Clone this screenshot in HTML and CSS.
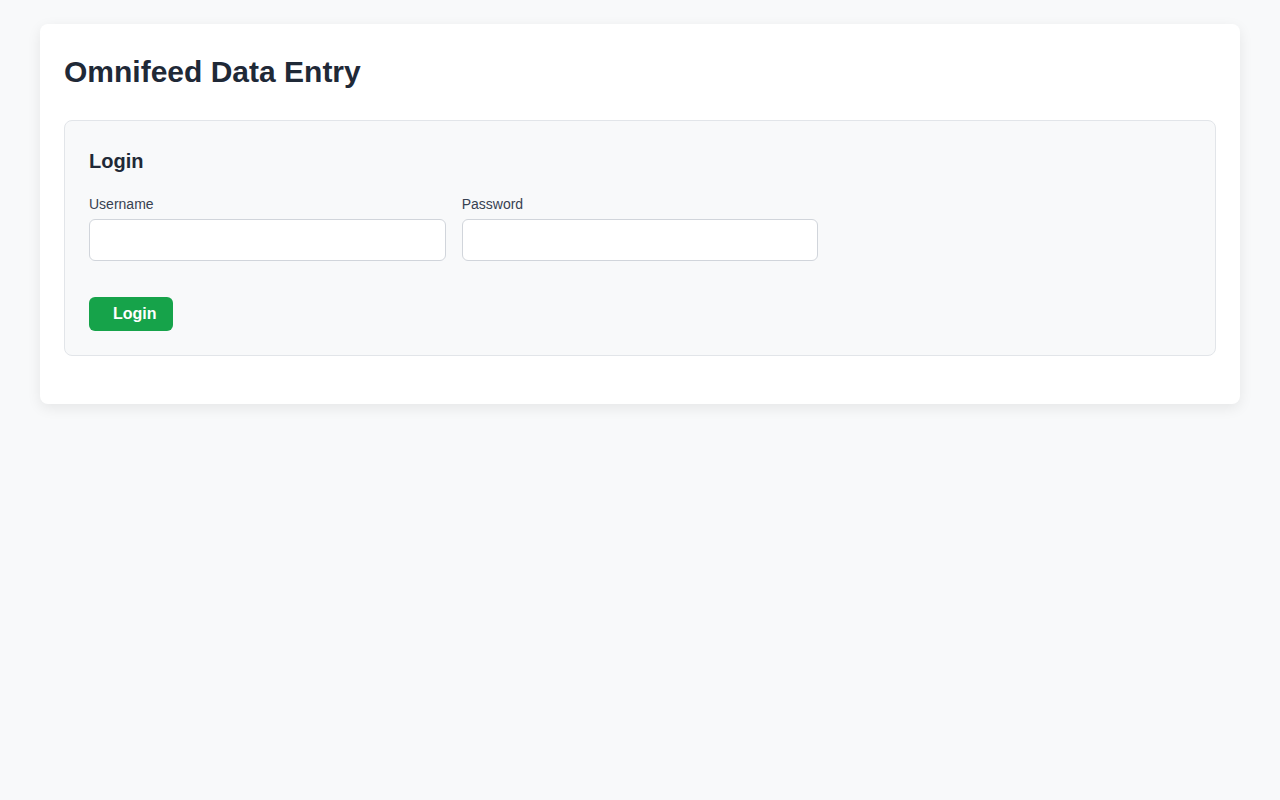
FILE: index.html
```html
<!DOCTYPE html>
<html lang="en">
<head>
<meta charset="utf-8">
<title>Omnifeed Data Entry</title>
<link rel="stylesheet" href="styles.css">
</head>
<body>
<main class="container">
  <h1 class="title">Omnifeed Data Entry</h1>
  <section class="panel">
    <h2 class="panel-title">Login</h2>
    <form class="form">
      <div class="grid">
        <div class="field">
          <label class="label" for="username">Username</label>
          <input class="input" id="username" type="text">
        </div>
        <div class="field">
          <label class="label" for="password">Password</label>
          <input class="input" id="password" type="password">
        </div>
      </div>
      <button class="btn" type="button">Login</button>
    </form>
  </section>
</main>
</body>
</html>
```

FILE: styles.css
```css
* { box-sizing: border-box; }
html, body { margin: 0; padding: 0; }
body {
  background: #f8f9fa;
  font-family: "Liberation Sans", Arial, sans-serif;
  color: #1f2937;
  padding: 24px 40px;
}
.container {
  background: #ffffff;
  border-radius: 8px;
  box-shadow: 0 4px 14px rgba(0, 0, 0, 0.08);
  padding: 31px 24px 32px;
}
.title {
  margin: 0 0 31px;
  font-size: 30px;
  line-height: 34px;
  font-weight: 700;
  color: #1f2937;
}
.panel {
  background: #f8f9fa;
  border: 1px solid #e2e5e9;
  border-radius: 8px;
  padding: 24px;
  margin-bottom: 16px;
}
.panel-title {
  margin: 1px 0 18px;
  font-size: 20px;
  line-height: 30px;
  font-weight: 700;
  color: #1f2937;
}
.form { display: flex; flex-direction: column; align-items: flex-start; }
.grid {
  display: grid;
  grid-template-columns: repeat(3, 1fr);
  gap: 16px;
  width: 100%;
  margin-bottom: 36px;
}
.field { display: flex; flex-direction: column; gap: 5px; }
.label {
  font-size: 14px;
  line-height: 20px;
  color: #374151;
}
.input {
  height: 42px;
  border: 1px solid #d1d5db;
  border-radius: 6px;
  background: #ffffff;
  padding: 8px 12px;
  font: inherit;
  font-size: 16px;
}
.btn {
  background: #16a34a;
  color: #ffffff;
  border: none;
  border-radius: 6px;
  height: 34px;
  padding: 0 16px 0 24px;
  font-family: "Liberation Sans", Arial, sans-serif;
  font-size: 16px;
  font-weight: 700;
  line-height: 18px;
  cursor: pointer;
}
```
